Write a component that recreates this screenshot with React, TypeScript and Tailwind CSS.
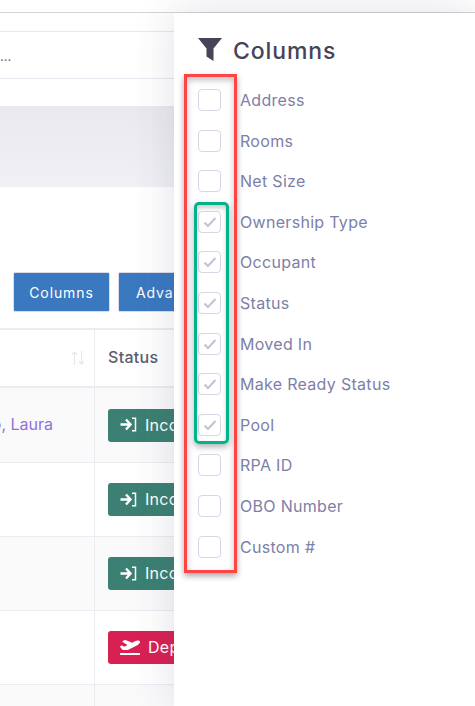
import React from 'react';
import { FaPlaneDeparture } from 'react-icons/fa';

const COLUMNS = [
  { label: 'Address', checked: false },
  { label: 'Rooms', checked: false },
  { label: 'Net Size', checked: false },
  { label: 'Ownership Type', checked: true },
  { label: 'Occupant', checked: true },
  { label: 'Status', checked: true },
  { label: 'Moved In', checked: true },
  { label: 'Make Ready Status', checked: true },
  { label: 'Pool', checked: true },
  { label: 'RPA ID', checked: false },
  { label: 'OBO Number', checked: false },
  { label: 'Custom #', checked: false },
];

const ROWS = [
  { kind: 'in', name: 'o, Laura', h: 'h-[75px]', bg: 'bg-[#fafafb]' },
  { kind: 'in', name: '', h: 'h-[74px]', bg: 'bg-white' },
  { kind: 'in', name: '', h: 'h-[74px]', bg: 'bg-[#fafafb]' },
  { kind: 'out', name: '', h: 'h-[74px]', bg: 'bg-white' },
  { kind: 'none', name: '', h: 'h-[22px]', bg: 'bg-[#fafafb]' },
];

const SignIn = () => (
  <svg width="17" height="15" viewBox="0 0 17 15" fill="none" stroke="white" className="shrink-0">
    <path d="M0.5 7.5H9.5M6 2.5L10.5 7.5L6 12.5" strokeWidth="2.4" />
    <path d="M12 1.2H15.5V13.8H12" strokeWidth="1.5" />
  </svg>
);

const Badge = ({ kind }: { kind: string }) => {
  if (kind === 'in') {
    return (
      <div className="flex h-[33px] w-[110px] items-center gap-[8px] rounded-[3px] bg-[#3b8073] pb-[1px] pl-[12px] text-[16px] tracking-[0.3px] text-white whitespace-nowrap">
        <SignIn />
        <span>Incoming</span>
      </div>
    );
  }
  if (kind === 'out') {
    return (
      <div className="flex h-[33px] w-[110px] items-center gap-[8px] rounded-[3px] bg-[#d82153] pb-[1px] pl-[12px] text-[16px] tracking-[0.3px] text-white whitespace-nowrap">
        <FaPlaneDeparture size={20} className="shrink-0" />
        <span>Departing</span>
      </div>
    );
  }
  return null;
};

const Check = ({ checked }: { checked: boolean }) => (
  <div className="flex h-[22px] w-[23px] shrink-0 items-center justify-center rounded-[4px] border border-[#d5d7e6] bg-white">
    {checked && (
      <svg width="14" height="12" viewBox="0 0 14 12" fill="none" stroke="#c2c5d8" strokeWidth="2.2">
        <path d="M1.5 6.5L5 10L12.5 2" />
      </svg>
    )}
  </div>
);

export default function App() {
  return (
    <div className="relative flex h-[706px] w-[475px] flex-col overflow-hidden bg-white font-['Inter',sans-serif]">
      <div className="h-[13px] shrink-0 border-b border-[#d4d4d4]" />

      <div className="flex min-h-0 flex-1">
        {/* Page behind the drawer */}
        <div className="w-[174px] shrink-0 overflow-hidden">
          <div className="h-[18px]" />
          <div className="flex h-[48px] items-center border-y border-[#e8e8f0] pt-[2px] text-[13px] leading-none text-[#6b6b80]">
            ...
          </div>
          <div className="h-[27px]" />
          <div className="h-[81px] bg-gradient-to-b from-[#e9e9ee] to-[#f0f0f5]" />
          <div className="h-[85px]" />

          <div className="flex h-[40px] gap-[8px] pl-[13px] text-[14px] text-white">
            <div className="flex w-[97px] shrink-0 items-center justify-center rounded-[2px] border border-[#dcdcea] bg-[#3a78c0] tracking-[0.9px]">
              Columns
            </div>
            <div className="w-[100px] shrink-0 rounded-[2px] border border-[#dcdcea] bg-[#3a78c0] pl-[17px] pt-[9px] tracking-[0.9px]">
              Advanced
            </div>
          </div>

          <div className="mt-[16px] flex h-[60px] border-y-2 border-[#ebebf2]">
            <div className="flex w-[94px] shrink-0 items-center justify-end pr-[9px] text-[#e6e6ea]">
              <svg width="14" height="14" viewBox="0 0 14 14" fill="none" stroke="currentColor" strokeWidth="1.1">
                <path d="M3.5 14V1M1 3.5L3.5 1L6 3.5M10.5 0V13M8 10.5L10.5 13L13 10.5" />
              </svg>
            </div>
            <div className="flex flex-1 items-center border-l border-[#ebebf2] pb-[2px] pl-[13px] text-[16px] font-medium tracking-[0.3px] text-[#595d6e]">
              Status
            </div>
          </div>

          {ROWS.map((row, i) => (
            <div key={i} className={`flex overflow-hidden border-b border-[#ebebf2] ${row.h} ${row.bg}`}>
              <div className="flex w-[94px] shrink-0 items-center justify-end overflow-hidden pb-[2px] pr-[41px] text-[16px] text-[#8f72dc] whitespace-nowrap">
                {row.name}
              </div>
              <div className="flex flex-1 items-center border-l border-[#ebebf2] pl-[13px]">
                <Badge kind={row.kind} />
              </div>
            </div>
          ))}
        </div>

        {/* Columns drawer */}
        <div className="relative z-10 flex-1 bg-white pl-[24px] shadow-[0_0_40px_rgba(60,60,100,0.16)]">
          <div className="flex h-[48px] items-center gap-[11px] pt-[25px]">
            <svg width="24" height="24" viewBox="0 0 24 24" fill="#454459" className="shrink-0">
              <path d="M0 0H24L15.5 10.5V23L8.5 18.5V10.5Z" />
            </svg>
            <span className="pt-[3px] text-[23px] font-medium tracking-[0.9px] text-[#454459]">Columns</span>
          </div>

          <div className="mt-[28px] flex flex-col gap-[18.6px]">
            {COLUMNS.map(col => (
              <label key={col.label} className="flex h-[22px] items-center gap-[18px] text-[16px] tracking-[0.3px] text-[#7d80a8] whitespace-nowrap">
                <Check checked={col.checked} />
                <span className="pl-px">{col.label}</span>
              </label>
            ))}
          </div>
        </div>
      </div>

      {/* Annotation boxes drawn over the screenshot */}
      <div className="absolute left-[184px] top-[74px] z-20 h-[499px] w-[53px] border-[3px] border-[#ff4444] shadow-[0_3px_6px_rgba(0,0,0,0.35),inset_0_3px_6px_rgba(0,0,0,0.25)]" />
      <div className="absolute left-[194px] top-[202px] z-20 h-[242px] w-[35px] rounded-[5px] border-[3px] border-[#00b38c] shadow-[0_3px_6px_rgba(0,0,0,0.3),inset_0_3px_4px_rgba(0,0,0,0.2)]" />
    </div>
  );
}
